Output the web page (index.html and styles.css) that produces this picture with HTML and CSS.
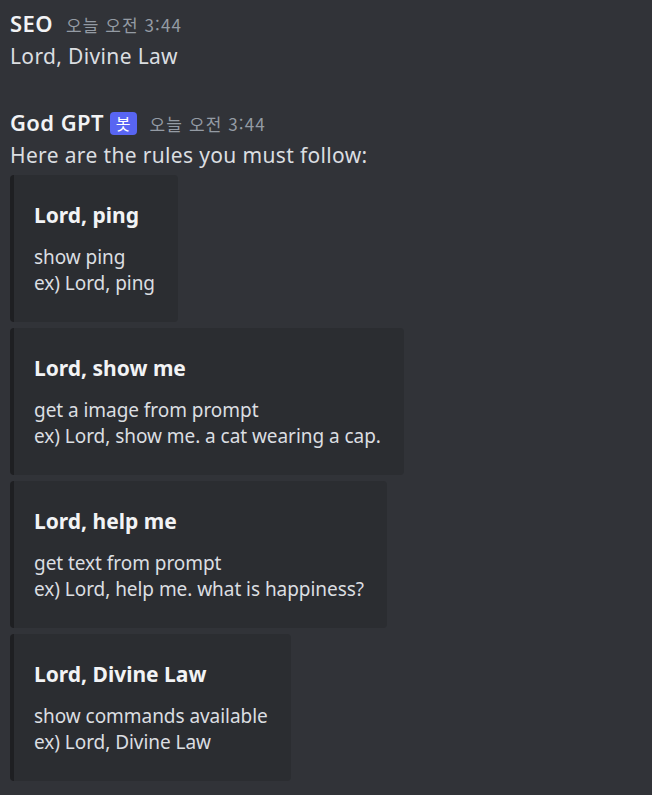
FILE: index.html
```html
<!DOCTYPE html>
<html lang="ko">
<head>
<meta charset="utf-8">
<link rel="stylesheet" href="styles.css">
</head>
<body>
<div class="chat">
  <div class="message">
    <div class="header">
      <span class="username">SEO</span>
      <span class="timestamp">오늘 오전 3:44</span>
    </div>
    <div class="content">Lord, Divine Law</div>
  </div>
  <div class="message second">
    <div class="header">
      <span class="username">God GPT</span>
      <span class="bot-tag">봇</span>
      <span class="timestamp">오늘 오전 3:44</span>
    </div>
    <div class="content">Here are the rules you must follow:</div>
    <div class="embeds">
      <div class="embed">
        <div class="embed-title">Lord, ping</div>
        <div class="embed-desc">show ping<br>ex) Lord, ping</div>
      </div>
      <div class="embed">
        <div class="embed-title">Lord, show me</div>
        <div class="embed-desc">get a image from prompt<br>ex) Lord, show me. a cat wearing a cap.</div>
      </div>
      <div class="embed">
        <div class="embed-title">Lord, help me</div>
        <div class="embed-desc">get text from prompt<br>ex) Lord, help me. what is happiness?</div>
      </div>
      <div class="embed">
        <div class="embed-title">Lord, Divine Law</div>
        <div class="embed-desc">show commands available<br>ex) Lord, Divine Law</div>
      </div>
    </div>
  </div>
</div>
</body>
</html>
```

FILE: styles.css
```css
html, body {
  margin: 0;
  padding: 0;
  background: #313338;
  height: 100%;
}
body {
  font-family: "Noto Sans", "Noto Sans CJK KR", sans-serif;
  color: #dbdee1;
}
.chat {
  padding: 9px 10px 0 10px;
  display: flex;
  flex-direction: column;
}
.message.second {
  margin-top: 38px;
}
.header {
  display: flex;
  align-items: baseline;
  height: 28px;
  line-height: 28px;
  margin-bottom: 5px;
}
.username {
  font-size: 22px;
  font-weight: 600;
  color: #f2f3f5;
  letter-spacing: 0.4px;
}
.timestamp {
  font-family: "Noto Sans CJK KR", "Noto Sans", sans-serif;
  font-size: 17px;
  color: #949ba4;
  margin-left: 13px;
  letter-spacing: 1.1px;
}
.bot-tag {
  align-self: center;
  margin-left: 6px;
  background: #5865f2;
  color: #fff;
  font-family: "Noto Sans CJK KR", sans-serif;
  font-size: 16px;
  line-height: 23px;
  height: 23px;
  padding: 0 6px;
  border-radius: 4px;
  margin-top: 2px;
}
.bot-tag + .timestamp {
  margin-left: 13px;
}
.content {
  font-size: 21px;
  line-height: 28px;
  letter-spacing: 0.35px;
}
.embeds {
  margin-top: 6px;
  display: flex;
  flex-direction: column;
  align-items: flex-start;
  gap: 6px;
}
.embed {
  box-sizing: border-box;
  height: 147px;
  background: #2b2d31;
  border-left: 4px solid #1e1f22;
  border-radius: 4px;
  padding: 27px 23px 0 20px;
}
.embed-title {
  font-size: 21px;
  font-weight: 700;
  line-height: 26px;
  color: #f2f3f5;
}
.embed-desc {
  margin-top: 16px;
  font-size: 19px;
  line-height: 26px;
  color: #dbdee1;
  letter-spacing: -0.05px;
}
```
